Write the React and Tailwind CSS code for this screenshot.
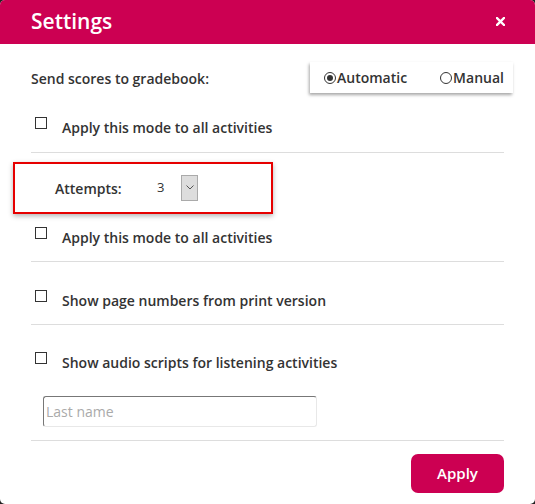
import React from 'react';

const font = { fontFamily: '"Open Sans", "Noto Sans", sans-serif' };

const Checkbox = () => (
  <span className="block w-[12px] h-[12px] border border-[#333] bg-white shrink-0" />
);

const CheckRow = ({ label }) => (
  <div className="flex items-start pl-[4px]">
    <Checkbox />
    <span className="ml-[15px] text-[14px] leading-[22px] font-semibold text-[#333]">{label}</span>
  </div>
);

const Radio = ({ checked, label }) => (
  <label className="flex items-center">
    <span className="w-[12px] h-[12px] rounded-full border border-[#333] flex items-center justify-center">
      {checked && <span className="w-[6px] h-[6px] rounded-full bg-[#333]" />}
    </span>
    <span className="ml-[1px] text-[14px] font-semibold text-[#333]">{label}</span>
  </label>
);

const Divider = () => <div className="h-px bg-[#dddddd]" />;

export default function App() {
  return (
    <div className="w-[535px] h-[504px] bg-[#222]" style={font}>
      <div className="w-full h-full bg-white rounded-[5px] overflow-hidden flex flex-col">
        <div className="h-[44px] bg-[#cc0052] flex items-center justify-between pl-[31px] pr-[31px]">
          <h1 className="text-[21px] font-semibold text-white leading-none -mt-[2px]">Settings</h1>
          <svg width="9" height="9" viewBox="0 0 9 9" className="mt-[-1px] mr-[-1px]">
            <path d="M1 1 L8 8 M8 1 L1 8" stroke="white" strokeWidth="2.4" strokeLinecap="square" />
          </svg>
        </div>

        <div className="px-[31px] pt-[18px] flex flex-col">
          <div className="flex items-center justify-between h-[31px]">
            <span className="text-[14px] font-semibold text-[#333] mt-[1px]">Send scores to gradebook:</span>
            <div className="w-[203px] h-[31px] -mr-[9px] bg-white shadow-[-1px_2px_3px_rgba(0,0,0,0.35)] flex items-center pl-[14px] gap-[33px]">
              <Radio checked label="Automatic" />
              <Radio label="Manual" />
            </div>
          </div>

          <div className="mt-[24px] pb-[13px]">
            <CheckRow label="Apply this mode to all activities" />
          </div>
          <Divider />

          <div className="mt-[9px] -ml-[18px] w-[260px] h-[52px] border-2 border-[#e60000] shadow-[0_2px_5px_rgba(0,0,0,0.3)] flex items-center">
            <span className="ml-[40px] w-[102px] text-[14px] font-semibold text-[#333]">Attempts:</span>
            <span className="w-[24px] text-[13px] text-[#333]">3</span>
            <button className="w-[17px] h-[26px] bg-[#dddddd] border border-[#aaaaaa] flex items-center justify-center -mt-[1px]">
              <svg width="8" height="5" viewBox="0 0 8 5">
                <path d="M0.5 0.5 L4 4 L7.5 0.5" stroke="#555" strokeWidth="1" fill="none" />
              </svg>
            </button>
          </div>

          <div className="mt-[13px] pb-[12px]">
            <CheckRow label="Apply this mode to all activities" />
          </div>
          <Divider />

          <div className="mt-[28px] pb-[12px]">
            <CheckRow label="Show page numbers from print version" />
          </div>
          <Divider />

          <div className="mt-[27px]">
            <CheckRow label="Show audio scripts for listening activities" />
          </div>

          <input
            type="text"
            placeholder="Last name"
            className="mt-[22px] ml-[12px] w-[274px] h-[31px] px-[2px] rounded-[3px] border border-t-[#777] border-l-[#777] border-r-[#e8e8e8] border-b-[#e8e8e8] text-[14px] text-[#333] placeholder:text-[#aaaaaa] outline-none"
          />

          <div className="mt-[13px]">
            <Divider />
          </div>

          <div className="flex justify-end mt-[13px]">
            <button className="w-[93px] h-[39px] rounded-[7px] bg-[#cc0052] text-white text-[15px] font-semibold">
              Apply
            </button>
          </div>
        </div>
      </div>
    </div>
  );
}
